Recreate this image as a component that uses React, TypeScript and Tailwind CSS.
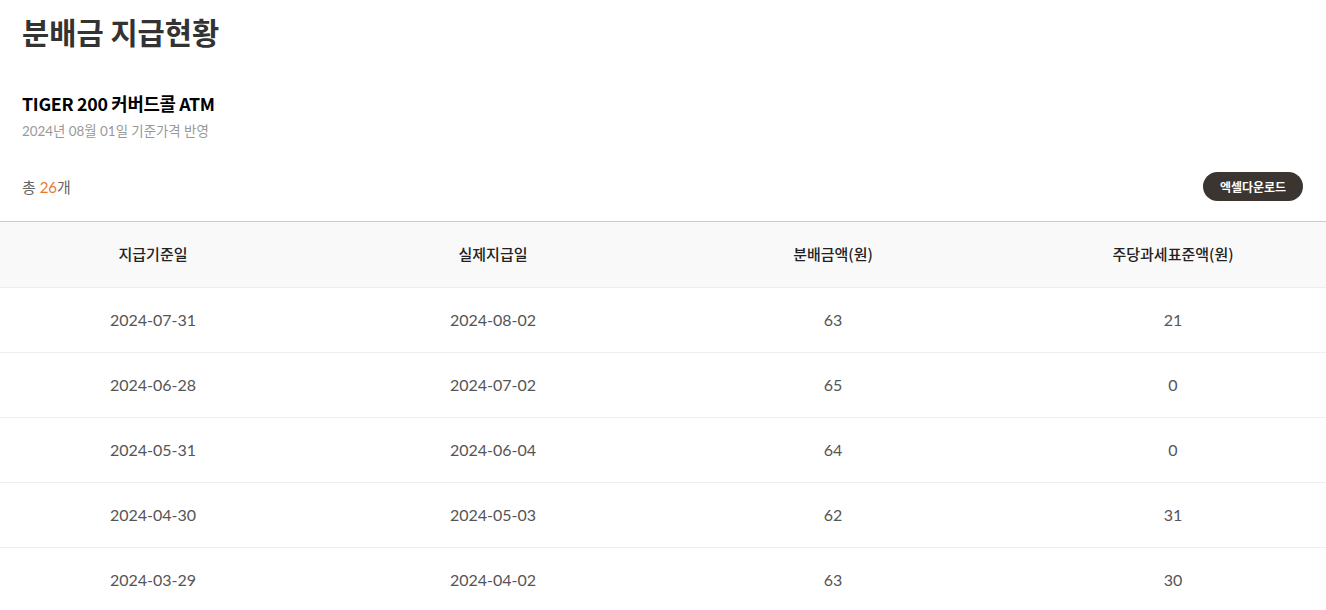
const ROWS = [
	['2024-07-31', '2024-08-02', '63', '21'],
	['2024-06-28', '2024-07-02', '65', '0'],
	['2024-05-31', '2024-06-04', '64', '0'],
	['2024-04-30', '2024-05-03', '62', '31'],
	['2024-03-29', '2024-04-02', '63', '30'],
]

const HEADER_LABELS = ['지급기준일', '실제지급일', '분배금액(원)', '주당과세표준액(원)']

const KR = "font-['Noto_Sans_CJK_KR','Noto_Sans',sans-serif]"
const NUM = "font-['Lato','Noto_Sans_CJK_KR',sans-serif]"

export default function App() {
	return (
		<div className={`min-h-screen bg-white ${KR}`}>
			<div className="px-[22px] pt-[10px]">
				<h1 className="text-[29.6px] leading-[44px] font-bold text-[#333]">분배금 지급현황</h1>
				<h2 className="mt-[37px] text-[17.8px] leading-[24px] font-bold tracking-[-0.3px] text-black">
					TIGER 200 커버드콜 ATM
				</h2>
				<p className={`mt-[7px] text-[13.4px] leading-[18px] text-[#999] ${NUM}`}>
					2024년 08월 01일 기준가격 반영
				</p>
			</div>
			<div className="flex items-center justify-between pr-[23px] pl-[22px] pt-[32px] pb-[20px]">
				<p className={`text-[15px] leading-[20px] text-[#666] ${NUM}`}>
					총 <span className="text-[#e8782f]">26</span>개
				</p>
				<button className="h-[29px] w-[100px] rounded-full bg-[#3a3530] text-[12px] font-bold text-white">
					엑셀다운로드
				</button>
			</div>
			<div className="overflow-hidden border-t border-[#cccccc]">
				<div className="-mx-[17px]">
					<div className="grid h-[66px] grid-cols-4 items-center border-b border-[#eeeeee] bg-[#f9f9f9]">
						{HEADER_LABELS.map((label) => (
							<div key={label} className="text-center text-[15px] font-medium text-[#222]">
								{label}
							</div>
						))}
					</div>
					{ROWS.map((row) => (
						<div
							key={row[0]}
							className="grid h-[65px] grid-cols-4 items-center border-b border-[#eeeeee]"
						>
							{row.map((cell, i) => (
								<div key={i} className={`text-center text-[16px] text-[#555] ${NUM}`}>
									{cell}
								</div>
							))}
						</div>
					))}
				</div>
			</div>
		</div>
	)
}
